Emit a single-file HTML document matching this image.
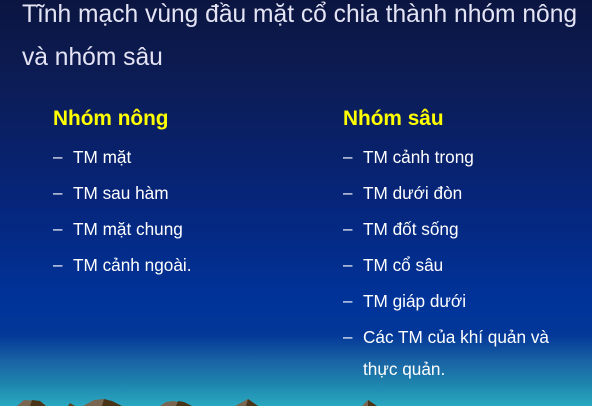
<!DOCTYPE html>
<html><head><meta charset="utf-8"><style>
html,body{margin:0;padding:0}
body{width:592px;height:406px;overflow:hidden;position:relative;font-family:"Liberation Sans",Arial,sans-serif;
background:linear-gradient(to bottom,#0b1540 0px,#0c1c55 80px,#06257a 200px,#003399 300px,#033899 335px,#1a64a4 362px,#1e86ae 385px,#2aa8c0 406px);}
.t{position:absolute;left:22px;color:#e4e4f4;font-size:24.6px;white-space:nowrap}
.h{position:absolute;color:#ffff00;font-weight:bold;font-size:20.8px}
.b{position:absolute;color:#ffffff;font-size:17.2px;white-space:nowrap}
.d{position:absolute;color:#fff;font-size:17px}
</style></head><body>
<div class="t" style="top:1px">Tĩnh mạch vùng đầu mặt cổ chia thành nhóm nông</div>
<div class="t" style="top:44px">và nhóm sâu</div>
<div class="h" style="left:53px;top:107px">Nhóm nông</div>
<div class="h" style="left:343px;top:107px">Nhóm sâu</div>

<div class="d" style="left:53px;top:147px">–</div><div class="b" style="left:73px;top:147px">TM mặt</div>
<div class="d" style="left:53px;top:183px">–</div><div class="b" style="left:73px;top:183px">TM sau hàm</div>
<div class="d" style="left:53px;top:219px">–</div><div class="b" style="left:73px;top:219px">TM mặt chung</div>
<div class="d" style="left:53px;top:255px">–</div><div class="b" style="left:73px;top:255px">TM cảnh ngoài.</div>

<div class="d" style="left:343px;top:147px">–</div><div class="b" style="left:363px;top:147px">TM cảnh trong</div>
<div class="d" style="left:343px;top:183px">–</div><div class="b" style="left:363px;top:183px">TM dưới đòn</div>
<div class="d" style="left:343px;top:219px">–</div><div class="b" style="left:363px;top:219px">TM đốt sống</div>
<div class="d" style="left:343px;top:255px">–</div><div class="b" style="left:363px;top:255px">TM cổ sâu</div>
<div class="d" style="left:343px;top:291px">–</div><div class="b" style="left:363px;top:291px">TM giáp dưới</div>
<div class="d" style="left:343px;top:327px">–</div><div class="b" style="left:363px;top:327px">Các TM của khí quản và</div>
<div class="b" style="left:363px;top:359px">thực quản.</div>

<svg style="position:absolute;left:0;top:398px" width="592" height="8">
<polygon points="17,8 24,2 40,3 46,8" fill="#7a6650"/><polygon points="30,8 32,2 40,3 46,8" fill="#4a3418"/>
<polygon points="68,8 70,5 75,8" fill="#5a4020"/>
<polygon points="83,8 94,2 104,1 122,8" fill="#7a6650"/><polygon points="102,8 104,1 112,3 122,8" fill="#4a3418"/>
<polygon points="160,8 166,4 174,3 192,8" fill="#7a6650"/><polygon points="176,8 178,3 184,4 192,8" fill="#4a3418"/>
<polygon points="235,8 248,1 258,8" fill="#7a6650"/><polygon points="246,8 248,1 258,8" fill="#4a3418"/>
<polygon points="362,8 368,2 377,8" fill="#7a6650"/><polygon points="368,8 368,2 377,8" fill="#4a3418"/>
</svg>
</body></html>
